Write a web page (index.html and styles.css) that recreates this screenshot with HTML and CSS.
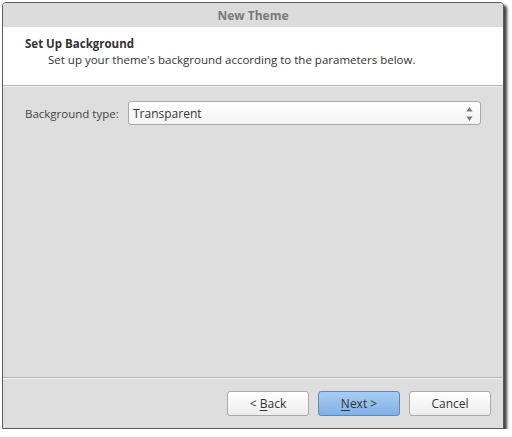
FILE: index.html
```html
<!DOCTYPE html>
<html>
<head>
<meta charset="utf-8">
<link rel="stylesheet" href="styles.css">
</head>
<body>
<div class="window">
  <div class="titlebar">New Theme</div>
  <div class="header">
    <div class="h-title">Set Up Background</div>
    <div class="h-sub">Set up your theme's background according to the parameters below.</div>
  </div>
  <div class="content">
    <div class="row">
      <span class="label">Background type:</span>
      <div class="combo">
        <span>Transparent</span>
        <span class="arrows">
          <svg width="7" height="16" viewBox="0 0 7 16"><path d="M3.5 1 L6.5 5.5 L0.5 5.5 Z" fill="#777"/><path d="M0.5 10.5 L6.5 10.5 L3.5 15 Z" fill="#777"/></svg>
        </span>
      </div>
    </div>
  </div>
  <div class="footer">
    <button class="btn">&lt; <u>B</u>ack</button>
    <button class="btn primary"><u>N</u>ext &gt;</button>
    <button class="btn">Cancel</button>
  </div>
</div>
</body>
</html>
```
FILE: styles.css
```css
html, body {
  margin: 0;
  padding: 0;
  background: #ffffff;
}
body {
  font-family: "Open Sans", "DejaVu Sans", sans-serif;
  font-size: 11.5px;
  color: #333;
}
.window {
  margin: 2px 0 0 2px;
  width: 500px;
  height: 425px;
  border: 1px solid #5a5a5a;
  border-radius: 4px 4px 0 0;
  background: #dedede;
  box-shadow: 3px 3px 3px rgba(0,0,0,0.75);
  display: flex;
  flex-direction: column;
  overflow: hidden;
}
.titlebar {
  height: 24px;
  line-height: 26px;
  text-align: center;
  font-weight: bold;
  font-size: 12px;
  color: #7a7a7a;
  background: #dcdcdc;
}
.header {
  background: #ffffff;
  height: 59px;
  padding: 9px 0 0 22px;
  box-sizing: border-box;
  border-bottom: 1px solid #b4b4b4;
  box-shadow: 0 1px 0 #f4f4f4;
}
.h-title {
  font-weight: bold;
  color: #333;
  line-height: 16px;
}
.h-sub {
  padding-left: 23px;
  line-height: 16px;
  color: #333;
}
.content {
  flex: 1;
  padding: 15px 22px 0 22px;
  border-bottom: 1px solid #b4b4b4;
}
.row {
  display: flex;
  align-items: center;
}
.label {
  width: 103px;
  color: #444;
}
.combo {
  flex: 1;
  height: 22px;
  border: 1px solid #a9a9a9;
  border-radius: 3px;
  background: linear-gradient(#ffffff, #f4f4f4);
  display: flex;
  align-items: center;
  justify-content: space-between;
  padding: 0 5px 0 4px;
  font-size: 12px;
  color: #333;
}
.arrows {
  display: flex;
  padding-right: 2px;
  padding-top: 2px;
}
.footer {
  height: 50px;
  box-shadow: inset 0 1px 0 #f4f4f4;
  display: flex;
  justify-content: flex-end;
  align-items: flex-start;
  padding: 13px 12px 0 0;
  box-sizing: border-box;
  gap: 9px;
}
.btn {
  width: 82px;
  height: 25px;
  font-family: inherit;
  font-size: 12px;
  color: #333;
  border: 1px solid #a9a9a9;
  border-radius: 3px;
  background: linear-gradient(#ffffff, #ededed);
  padding: 0;
}
.btn u {
  text-decoration-thickness: 1px;
  text-underline-offset: 2px;
}
.primary {
  border-color: #5d88b8;
  background: linear-gradient(#a9cdf1, #7fb1e6);
}
```
